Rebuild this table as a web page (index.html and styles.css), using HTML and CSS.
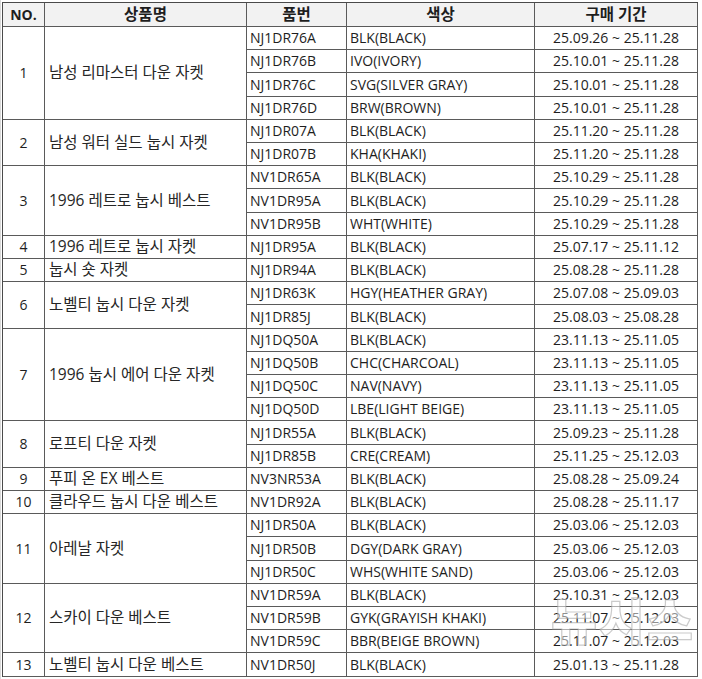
FILE: index.html
```html
<!DOCTYPE html>
<html lang="ko">
<head>
<meta charset="utf-8">
<title>제품 목록</title>
<link rel="stylesheet" href="styles.css">
</head>
<body>
<div class="sheet">
  <div class="grid">
    <div class="h hn">NO.</div><div class="h">상품명</div><div class="h">품번</div><div class="h">색상</div><div class="h">구매 기간</div>

    <div class="no s4">1</div><div class="nm s4">남성 리마스터 다운 자켓</div>
    <div class="c">NJ1DR76A</div><div class="c">BLK(BLACK)</div><div class="d">25.09.26 ~ 25.11.28</div>
    <div class="c">NJ1DR76B</div><div class="c">IVO(IVORY)</div><div class="d">25.10.01 ~ 25.11.28</div>
    <div class="c">NJ1DR76C</div><div class="c">SVG(SILVER GRAY)</div><div class="d">25.10.01 ~ 25.11.28</div>
    <div class="c">NJ1DR76D</div><div class="c">BRW(BROWN)</div><div class="d">25.10.01 ~ 25.11.28</div>

    <div class="no s2">2</div><div class="nm s2">남성 워터 실드 눕시 자켓</div>
    <div class="c">NJ1DR07A</div><div class="c">BLK(BLACK)</div><div class="d">25.11.20 ~ 25.11.28</div>
    <div class="c">NJ1DR07B</div><div class="c">KHA(KHAKI)</div><div class="d">25.11.20 ~ 25.11.28</div>

    <div class="no s3">3</div><div class="nm s3">1996 레트로 눕시 베스트</div>
    <div class="c">NV1DR65A</div><div class="c">BLK(BLACK)</div><div class="d">25.10.29 ~ 25.11.28</div>
    <div class="c">NV1DR95A</div><div class="c">BLK(BLACK)</div><div class="d">25.10.29 ~ 25.11.28</div>
    <div class="c">NV1DR95B</div><div class="c">WHT(WHITE)</div><div class="d">25.10.29 ~ 25.11.28</div>

    <div class="no">4</div><div class="nm">1996 레트로 눕시 자켓</div>
    <div class="c">NJ1DR95A</div><div class="c">BLK(BLACK)</div><div class="d">25.07.17 ~ 25.11.12</div>

    <div class="no">5</div><div class="nm">눕시 숏 자켓</div>
    <div class="c">NJ1DR94A</div><div class="c">BLK(BLACK)</div><div class="d">25.08.28 ~ 25.11.28</div>

    <div class="no s2">6</div><div class="nm s2">노벨티 눕시 다운 자켓</div>
    <div class="c">NJ1DR63K</div><div class="c">HGY(HEATHER GRAY)</div><div class="d">25.07.08 ~ 25.09.03</div>
    <div class="c">NJ1DR85J</div><div class="c">BLK(BLACK)</div><div class="d">25.08.03 ~ 25.08.28</div>

    <div class="no s4">7</div><div class="nm s4">1996 눕시 에어 다운 자켓</div>
    <div class="c">NJ1DQ50A</div><div class="c">BLK(BLACK)</div><div class="d">23.11.13 ~ 25.11.05</div>
    <div class="c">NJ1DQ50B</div><div class="c">CHC(CHARCOAL)</div><div class="d">23.11.13 ~ 25.11.05</div>
    <div class="c">NJ1DQ50C</div><div class="c">NAV(NAVY)</div><div class="d">23.11.13 ~ 25.11.05</div>
    <div class="c">NJ1DQ50D</div><div class="c">LBE(LIGHT BEIGE)</div><div class="d">23.11.13 ~ 25.11.05</div>

    <div class="no s2">8</div><div class="nm s2">로프티 다운 자켓</div>
    <div class="c">NJ1DR55A</div><div class="c">BLK(BLACK)</div><div class="d">25.09.23 ~ 25.11.28</div>
    <div class="c">NJ1DR85B</div><div class="c">CRE(CREAM)</div><div class="d">25.11.25 ~ 25.12.03</div>

    <div class="no">9</div><div class="nm">푸피 온 EX 베스트</div>
    <div class="c">NV3NR53A</div><div class="c">BLK(BLACK)</div><div class="d">25.08.28 ~ 25.09.24</div>

    <div class="no">10</div><div class="nm">클라우드 눕시 다운 베스트</div>
    <div class="c">NV1DR92A</div><div class="c">BLK(BLACK)</div><div class="d">25.08.28 ~ 25.11.17</div>

    <div class="no s3">11</div><div class="nm s3">아레날 자켓</div>
    <div class="c">NJ1DR50A</div><div class="c">BLK(BLACK)</div><div class="d">25.03.06 ~ 25.12.03</div>
    <div class="c">NJ1DR50B</div><div class="c">DGY(DARK GRAY)</div><div class="d">25.03.06 ~ 25.12.03</div>
    <div class="c">NJ1DR50C</div><div class="c">WHS(WHITE SAND)</div><div class="d">25.03.06 ~ 25.12.03</div>

    <div class="no s3">12</div><div class="nm s3">스카이 다운 베스트</div>
    <div class="c">NV1DR59A</div><div class="c">BLK(BLACK)</div><div class="d">25.10.31 ~ 25.12.03</div>
    <div class="c">NV1DR59B</div><div class="c">GYK(GRAYISH KHAKI)</div><div class="d">25.11.07 ~ 25.12.03</div>
    <div class="c">NV1DR59C</div><div class="c">BBR(BEIGE BROWN)</div><div class="d">25.11.07 ~ 25.12.03</div>

    <div class="no">13</div><div class="nm">노벨티 눕시 다운 베스트</div>
    <div class="c">NV1DR50J</div><div class="c">BLK(BLACK)</div><div class="d">25.01.13 ~ 25.11.28</div>
  </div>
  <div class="mark">뉴시스</div>
</div>
</body>
</html>
```

FILE: styles.css
```css
html, body {
  margin: 0;
  padding: 0;
  background: #ffffff;
}

.sheet {
  position: relative;
  padding: 2px 0 0 1px;
  width: 702px;
  height: 679px;
  box-sizing: border-box;
  overflow: hidden;
  border-left: 1px solid #d9d9d9;
  font-family: "Open Sans", "Noto Sans CJK KR", sans-serif;
  font-size: 14px;
  color: #1e1e1e;
}

.grid {
  display: grid;
  grid-template-columns: 42px 202px 100px 188px 163px;
  grid-template-rows: 24px repeat(28, 23.214px);
  border-top: 1px solid #4a4a4a;
  border-left: 1px solid #4a4a4a;
  width: max-content;
}

.grid > div {
  border-right: 1px solid #5a5a5a;
  border-bottom: 1px solid #5a5a5a;
  display: flex;
  align-items: center;
  white-space: nowrap;
  overflow: hidden;
  line-height: 1;
}

.h {
  background: #f2f2f2;
  font-weight: 700;
  font-size: 15.5px;
  justify-content: center;
}

.hn {
  font-size: 14px;
}

.no {
  justify-content: center;
}

.nm {
  padding-left: 4px;
  font-size: 15.5px;
  color: #262626;
}

.c {
  padding-left: 3px;
}

.d {
  justify-content: center;
}

.s2 { grid-row: span 2; }
.s3 { grid-row: span 3; }
.s4 { grid-row: span 4; }

.mark {
  position: absolute;
  left: 550px;
  top: 582px;
  font-family: "Noto Sans CJK KR", sans-serif;
  font-weight: 900;
  font-size: 50px;
  letter-spacing: 2px;
  color: rgba(255, 255, 255, 0.5);
  -webkit-text-stroke: 1.2px rgba(160, 160, 160, 0.55);
  pointer-events: none;
}
```
